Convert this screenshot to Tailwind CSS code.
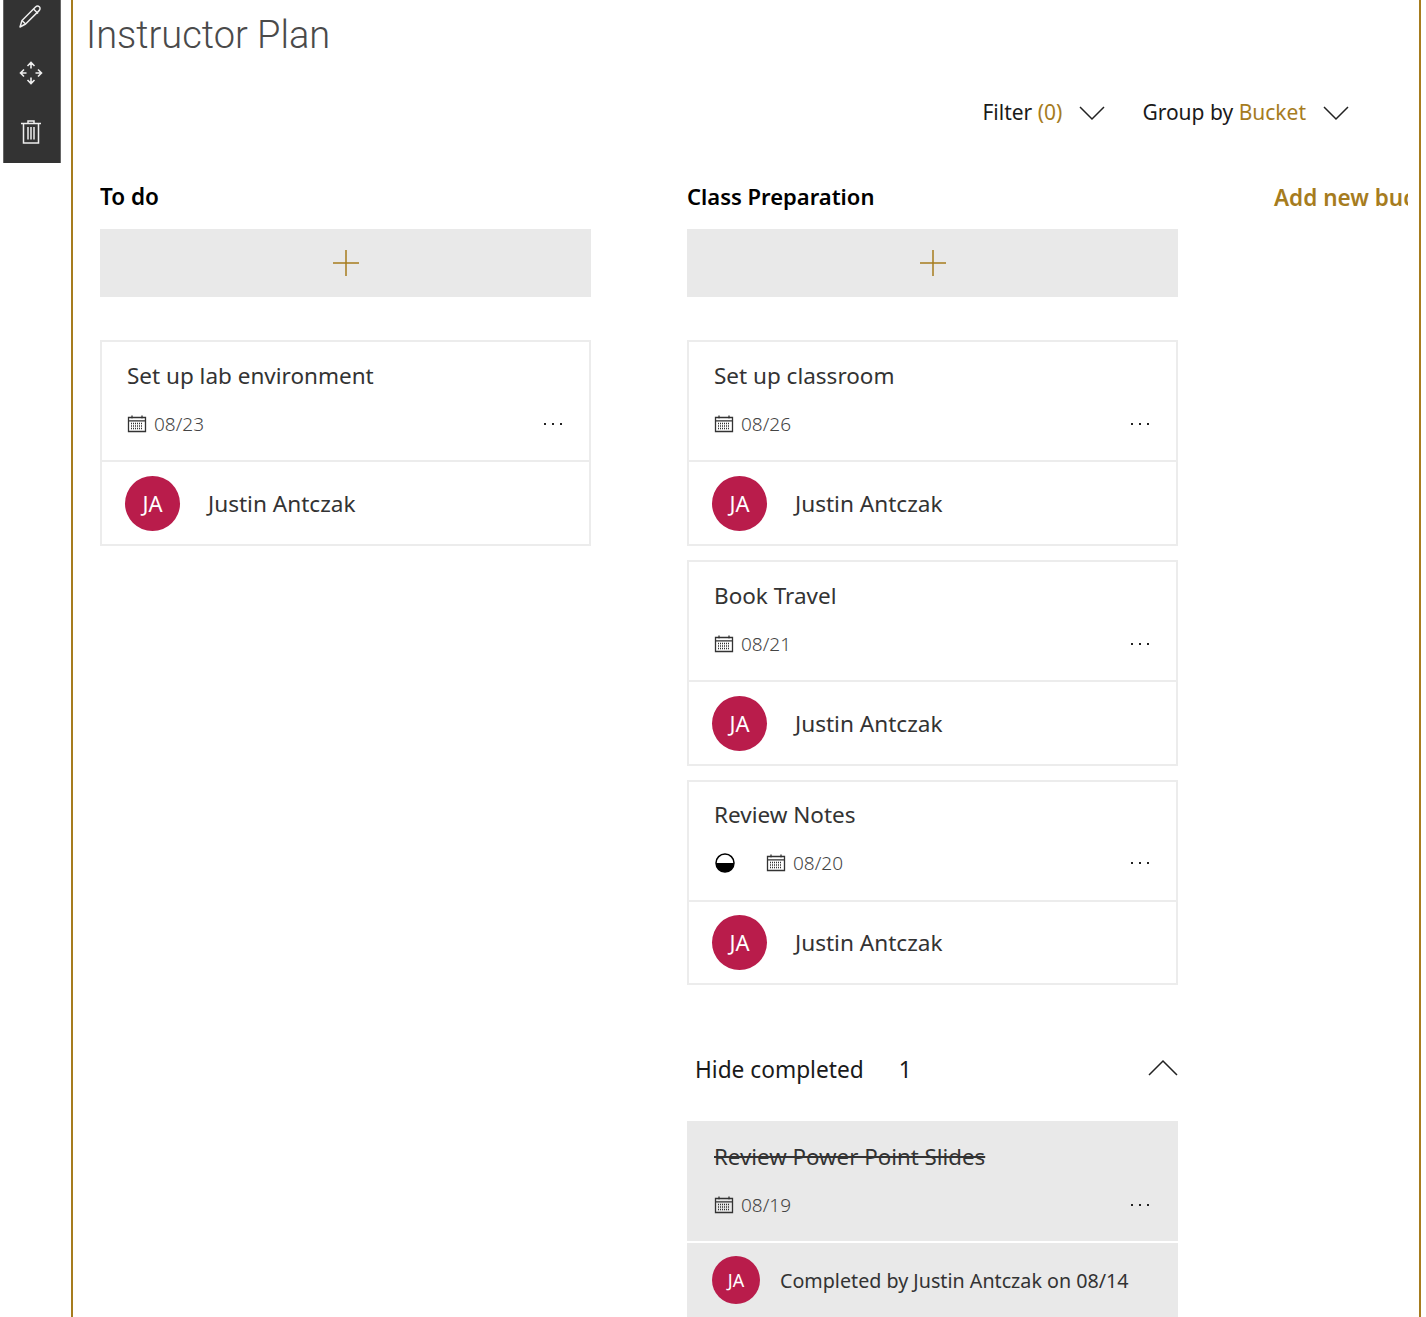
<!DOCTYPE html>
<html lang="en">
<head>
  <meta charset="UTF-8" />
  <title>Instructor Plan</title>
  <script src="https://cdn.jsdelivr.net/npm/@tailwindcss/browser@4"></script>
</head>
<body class="bg-white text-[#333] font-['Noto_Sans',sans-serif] h-[1317px] overflow-hidden">
  <div class="flex h-[1317px]">
    <!-- edit toolbar -->
    <div class="ml-[3px] w-[58px] h-[163px] bg-[#333] flex flex-col items-center pr-[2px] shrink-0 border-x border-[#666]">
      <svg class="mt-[3px] w-[26px] h-[26px]" viewBox="0 0 26 26" fill="none" stroke="#eee" stroke-width="1.500" stroke-linejoin="round"><path d="M4 17.500 17.500 4c1.200-1.200 2.800-1.200 3.800-.2s1 2.600-.2 3.800L7.600 21 2 24z"/><path d="M15.500 6l4.500 4.500M4 17.500l3.600 3.500"/></svg>
      <svg class="mt-[32px] w-[24px] h-[24px]" viewBox="0 0 24 24" fill="none" stroke="#eee" stroke-width="1.600"><path d="M12 1.500v6M8.500 5 12 1.500 15.500 5M12 16.500v6M8.500 19l3.500 3.500 3.500-3.500M1.500 12h6M5 8.500 1.500 12 5 15.500M16.500 12h6M19 8.500l3.500 3.500-3.500 3.500"/></svg>
      <svg class="mt-[34px] w-[22px] h-[26px]" viewBox="0 0 22 26" fill="none" stroke="#eee" stroke-width="1.500"><path d="M1 4.500h20M8 4.500V2h6v2.500M3.500 4.500v19.500h15V4.500M8 8v12.500M11 8v12.500M14 8v12.500"/></svg>
    </div>

    <main class="ml-[10px] w-[1350px] h-[1317px] border-x-2 border-[#a67c1e] overflow-hidden shrink-0">
      <h1 class="ml-[13px] mt-[9px] h-[52px] text-[38px] leading-[52px] font-light font-['Roboto',sans-serif] text-[#4a4a4a]">Instructor Plan</h1>

      <div class="mt-[37px] h-[30px] flex items-center justify-end pr-[70px] text-[21px] text-[#1a1a1a]">
        <span>Filter <span class="text-[#a67c1e]">(0)</span></span>
        <svg class="ml-[17px] w-[26px] h-[16px]" viewBox="0 0 26 16" fill="none" stroke="#222" stroke-width="1.500"><path d="M1 2l12 12L25 2"/></svg>
        <span class="ml-[37px]">Group by <span class="text-[#a67c1e]">Bucket</span></span>
        <svg class="ml-[17px] w-[26px] h-[16px]" viewBox="0 0 26 16" fill="none" stroke="#222" stroke-width="1.500"><path d="M1 2l12 12L25 2"/></svg>
      </div>

      <div class="mt-[52px] ml-[27px] w-[1308px] overflow-hidden flex gap-[96px]">
        <!-- To do -->
        <section class="w-[491px] shrink-0">
          <h2 class="h-[33px] text-[22.500px] leading-[34px] font-semibold text-black">To do</h2>
          <div class="mt-[16px] h-[68px] bg-[#e9e9e9] flex items-center justify-center">
            <svg class="w-[28px] h-[28px]" viewBox="0 0 28 28" stroke="#a67c1e" stroke-width="1.500"><path d="M14 1v26M1 14h26"/></svg>
          </div>
          <article class="mt-[43px] h-[206px] border-2 border-[#ececec] flex flex-col">
            <div class="h-[120px] pl-[25px] pr-[27px] border-b-2 border-[#ececec]">
              <p class="mt-[16px] h-[36px] text-[22.500px] leading-[36px]">Set up lab environment</p>
              <div class="mt-[18px] h-[24px] flex items-center">
                <svg class="w-[20px] h-[20px] shrink-0" viewBox="0 0 20 20" fill="none" stroke="#333" stroke-width="1.300"><path d="M1.500 3.500h17v14h-17zM1.500 6.800h17M5 1.500v3M15 1.500v3"/><path stroke-dasharray="1 1" d="M4 9.500h12M4 12h12M4 14.500h12"/></svg>
                <span class="ml-[7px] text-[19px] font-light text-[#444]">08/23</span>
                <span class="ml-auto flex gap-[6px]"><i class="w-[2px] h-[2px] bg-[#222]"></i><i class="w-[2px] h-[2px] bg-[#222]"></i><i class="w-[2px] h-[2px] bg-[#222]"></i></span>
              </div>
            </div>
            <div class="flex-1 flex items-center pl-[23px]">
              <div class="w-[55px] h-[55px] rounded-full bg-[#b91c4b] text-white flex items-center justify-center text-[22px]">JA</div>
              <span class="ml-[28px] mt-[2px] text-[22.600px]">Justin Antczak</span>
            </div>
          </article>
        </section>

        <!-- Class Preparation -->
        <section class="w-[491px] shrink-0">
          <h2 class="h-[33px] text-[22px] leading-[32px] font-semibold text-black">Class Preparation</h2>
          <div class="mt-[16px] h-[68px] bg-[#e9e9e9] flex items-center justify-center">
            <svg class="w-[28px] h-[28px]" viewBox="0 0 28 28" stroke="#a67c1e" stroke-width="1.500"><path d="M14 1v26M1 14h26"/></svg>
          </div>
          <article class="mt-[43px] h-[206px] border-2 border-[#ececec] flex flex-col">
            <div class="h-[120px] pl-[25px] pr-[27px] border-b-2 border-[#ececec]">
              <p class="mt-[16px] h-[36px] text-[22.500px] leading-[36px]">Set up classroom</p>
              <div class="mt-[18px] h-[24px] flex items-center">
                <svg class="w-[20px] h-[20px] shrink-0" viewBox="0 0 20 20" fill="none" stroke="#333" stroke-width="1.300"><path d="M1.500 3.500h17v14h-17zM1.500 6.800h17M5 1.500v3M15 1.500v3"/><path stroke-dasharray="1 1" d="M4 9.500h12M4 12h12M4 14.500h12"/></svg>
                <span class="ml-[7px] text-[19px] font-light text-[#444]">08/26</span>
                <span class="ml-auto flex gap-[6px]"><i class="w-[2px] h-[2px] bg-[#222]"></i><i class="w-[2px] h-[2px] bg-[#222]"></i><i class="w-[2px] h-[2px] bg-[#222]"></i></span>
              </div>
            </div>
            <div class="flex-1 flex items-center pl-[23px]">
              <div class="w-[55px] h-[55px] rounded-full bg-[#b91c4b] text-white flex items-center justify-center text-[22px]">JA</div>
              <span class="ml-[28px] mt-[2px] text-[22.600px]">Justin Antczak</span>
            </div>
          </article>
          <article class="mt-[14px] h-[206px] border-2 border-[#ececec] flex flex-col">
            <div class="h-[120px] pl-[25px] pr-[27px] border-b-2 border-[#ececec]">
              <p class="mt-[16px] h-[36px] text-[22.500px] leading-[36px]">Book Travel</p>
              <div class="mt-[18px] h-[24px] flex items-center">
                <svg class="w-[20px] h-[20px] shrink-0" viewBox="0 0 20 20" fill="none" stroke="#333" stroke-width="1.300"><path d="M1.500 3.500h17v14h-17zM1.500 6.800h17M5 1.500v3M15 1.500v3"/><path stroke-dasharray="1 1" d="M4 9.500h12M4 12h12M4 14.500h12"/></svg>
                <span class="ml-[7px] text-[19px] font-light text-[#444]">08/21</span>
                <span class="ml-auto flex gap-[6px]"><i class="w-[2px] h-[2px] bg-[#222]"></i><i class="w-[2px] h-[2px] bg-[#222]"></i><i class="w-[2px] h-[2px] bg-[#222]"></i></span>
              </div>
            </div>
            <div class="flex-1 flex items-center pl-[23px]">
              <div class="w-[55px] h-[55px] rounded-full bg-[#b91c4b] text-white flex items-center justify-center text-[22px]">JA</div>
              <span class="ml-[28px] mt-[2px] text-[22.600px]">Justin Antczak</span>
            </div>
          </article>
          <article class="mt-[14px] h-[205px] border-2 border-[#ececec] flex flex-col">
            <div class="h-[120px] pl-[25px] pr-[27px] border-b-2 border-[#ececec]">
              <p class="mt-[15px] h-[36px] text-[22.500px] leading-[36px]">Review Notes</p>
              <div class="mt-[18px] h-[24px] flex items-center">
                <svg class="ml-[1px] w-[20px] h-[20px] shrink-0" viewBox="0 0 20 20"><circle cx="10" cy="10" r="9" fill="none" stroke="#000" stroke-width="1.500"/><path d="M1 10a9 9 0 0 0 18 0z" fill="#000"/></svg>
                <svg class="ml-[31px] w-[20px] h-[20px] shrink-0" viewBox="0 0 20 20" fill="none" stroke="#333" stroke-width="1.300"><path d="M1.500 3.500h17v14h-17zM1.500 6.800h17M5 1.500v3M15 1.500v3"/><path stroke-dasharray="1 1" d="M4 9.500h12M4 12h12M4 14.500h12"/></svg>
                <span class="ml-[7px] text-[19px] font-light text-[#444]">08/20</span>
                <span class="ml-auto flex gap-[6px]"><i class="w-[2px] h-[2px] bg-[#222]"></i><i class="w-[2px] h-[2px] bg-[#222]"></i><i class="w-[2px] h-[2px] bg-[#222]"></i></span>
              </div>
            </div>
            <div class="flex-1 flex items-center pl-[23px]">
              <div class="w-[55px] h-[55px] rounded-full bg-[#b91c4b] text-white flex items-center justify-center text-[22px]">JA</div>
              <span class="ml-[28px] text-[22.600px]">Justin Antczak</span>
            </div>
          </article>

          <div class="mt-[66px] h-[38px] flex items-center pl-[8px] text-[22.700px] text-[#1a1a1a]">
            <span>Hide completed</span>
            <span class="ml-[35px]">1</span>
            <svg class="ml-auto -mt-[4px] w-[30px] h-[18px]" viewBox="0 0 30 18" fill="none" stroke="#222" stroke-width="1.500"><path d="M1 16 15 2l14 14"/></svg>
          </div>

          <article class="mt-[32px] h-[196px] bg-[#e9e9e9] flex flex-col">
            <div class="h-[122px] pl-[27px] pr-[29px] border-b-2 border-white">
              <p class="pt-[18px] h-[54px] text-[22.300px] leading-[36px] line-through">Review Power Point Slides</p>
              <div class="mt-[18px] h-[24px] flex items-center">
                <svg class="w-[20px] h-[20px] shrink-0" viewBox="0 0 20 20" fill="none" stroke="#333" stroke-width="1.300"><path d="M1.500 3.500h17v14h-17zM1.500 6.800h17M5 1.500v3M15 1.500v3"/><path stroke-dasharray="1 1" d="M4 9.500h12M4 12h12M4 14.500h12"/></svg>
                <span class="ml-[7px] text-[19px] font-light text-[#444]">08/19</span>
                <span class="ml-auto flex gap-[6px]"><i class="w-[2px] h-[2px] bg-[#222]"></i><i class="w-[2px] h-[2px] bg-[#222]"></i><i class="w-[2px] h-[2px] bg-[#222]"></i></span>
              </div>
            </div>
            <div class="flex-1 flex items-center pl-[25px]">
              <div class="w-[48px] h-[48px] rounded-full bg-[#b91c4b] text-white flex items-center justify-center text-[18px]">JA</div>
              <span class="ml-[20px] mt-[2px] text-[19.700px]">Completed by Justin Antczak on 08/14</span>
            </div>
          </article>
        </section>

        <h2 class="shrink-0 h-[33px] text-[22.500px] leading-[36px] font-semibold text-[#a67c1e] whitespace-nowrap">Add new bucket</h2>
      </div>
    </main>
  </div>
</body>
</html>
